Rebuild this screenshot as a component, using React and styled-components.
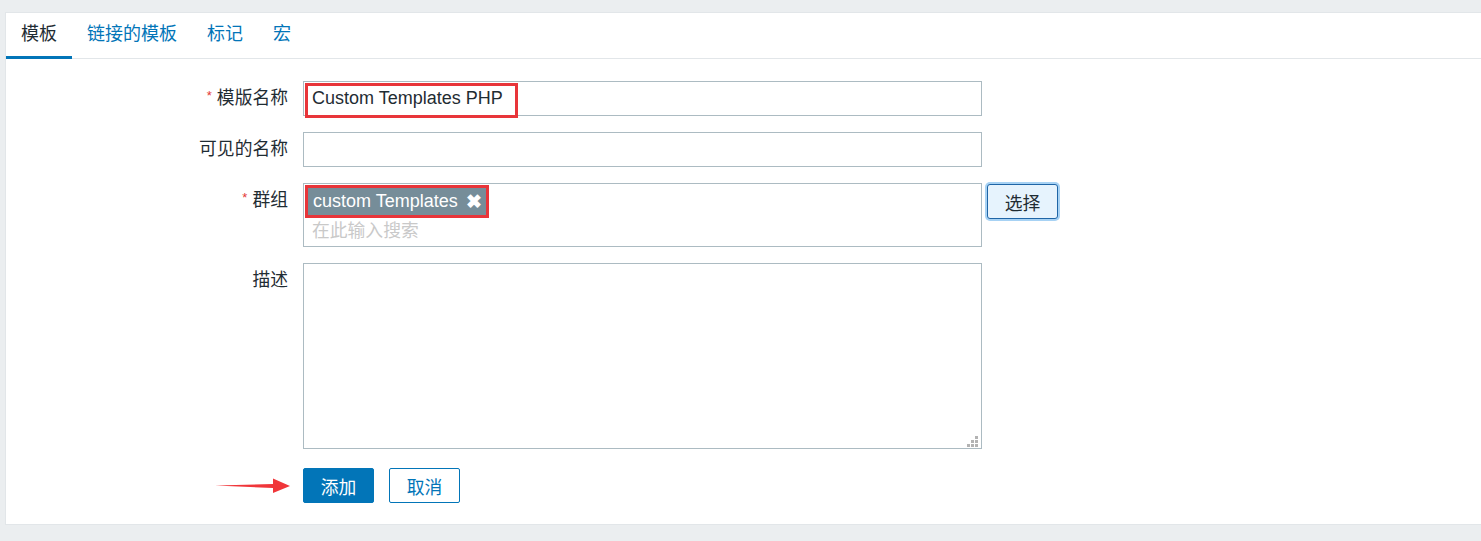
import React from 'react';
import styled, { createGlobalStyle } from 'styled-components';

const GlobalStyle = createGlobalStyle`
  html, body {
    margin: 0;
    background: #ebeef0;
    font-family: "Liberation Sans", "Noto Sans CJK SC", sans-serif;
    color: #1f2c33;
  }
`;

const Page = styled.div`
  padding: 12px 0 16px 5px;
`;

const Panel = styled.div`
  background: #fff;
  border: 1px solid #e2e6e9;
  border-right: none;
  height: 513px;
  box-sizing: border-box;
`;

const TabBar = styled.div`
  display: flex;
  height: 46px;
  border-bottom: 1px solid #e2e6e9;
  box-sizing: border-box;
`;

const Tab = styled.div`
  padding: 0 15px;
  font-size: 18px;
  line-height: 42px;
  color: ${({ active }) => (active ? '#1f2c33' : '#0275b8')};
  border-bottom: 3px solid ${({ active }) => (active ? '#0275b8' : 'transparent')};
  margin-bottom: -1px;
`;

const Form = styled.div`
  display: grid;
  grid-template-columns: 282px 679px 1fr;
  column-gap: 15px;
  row-gap: 16px;
  padding-top: 22px;
`;

const Label = styled.div`
  grid-column: 1;
  height: 35px;
  text-align: right;
  font-size: 17.8px;
  line-height: 35px;
  white-space: nowrap;
`;

const Star = styled.span`
  color: #e33734;
  font-size: 13px;
  line-height: 0;
  vertical-align: 4px;
  margin-right: 5px;
`;

const Field = styled.div`
  grid-column: 2 / 4;
  display: flex;
  align-items: flex-start;
  gap: 5px;
`;

const Boxed = styled.div`
  position: relative;
  width: 679px;
  flex: none;
`;

const TextInput = styled.div`
  height: 35px;
  box-sizing: border-box;
  border: 1px solid #acbbc2;
  padding: 0 8px;
  font-size: 18px;
  line-height: 33px;
  color: #1f2c33;
`;

const Mark = styled.div`
  position: absolute;
  left: ${({ $l }) => $l}px;
  top: ${({ $t }) => $t}px;
  width: ${({ $w }) => $w}px;
  height: ${({ $h }) => $h}px;
  border: 3px solid #e8353a;
  box-sizing: border-box;
  pointer-events: none;
`;

const MultiBox = styled.div`
  height: 64px;
  box-sizing: border-box;
  border: 1px solid #acbbc2;
  padding: 3px 3px 0;
`;

const Chip = styled.span`
  display: inline-flex;
  align-items: center;
  gap: 8px;
  height: 28px;
  padding: 0 5px 0 6px;
  background: #768d99;
  color: #fff;
  font-size: 18px;
`;

const ChipX = styled.span`
  font-size: 19px;
  font-weight: bold;
  line-height: 1;
`;

const Placeholder = styled.div`
  padding-left: 5px;
  font-size: 17.8px;
  line-height: 32px;
  color: #c9c9c9;
`;

const SelectButton = styled.button`
  margin-top: 1px;
  width: 71px;
  height: 35px;
  background: #e6f3fd;
  border: 1px solid #1f65a6;
  border-radius: 3px;
  box-shadow: 0 0 0 2px #a7d2f4;
  font-family: inherit;
  font-size: 17.8px;
  color: #1f2c33;
  padding: 0;
`;

const Area = styled.div`
  height: 186px;
  box-sizing: border-box;
  border: 1px solid #acbbc2;
`;

const Grip = styled.svg`
  position: absolute;
  right: 4px;
  bottom: 2px;
`;

const ArrowCell = styled.div`
  grid-column: 1;
  display: flex;
  justify-content: flex-end;
  align-items: center;
  height: 35px;
  margin-top: 3px;
  margin-right: -3px;
`;

const Actions = styled.div`
  grid-column: 2 / 4;
  display: flex;
  gap: 15px;
  margin-top: 3px;
`;

const Button = styled.button`
  width: 71px;
  height: 35px;
  border-radius: 2px;
  font-family: inherit;
  font-size: 17.8px;
  padding: 0;
  border: 1px solid #0275b8;
  background: ${({ primary }) => (primary ? '#0275b8' : '#fff')};
  color: ${({ primary }) => (primary ? '#fff' : '#0275b8')};
`;

const Row = styled.div`
  display: contents;
`;

export default function App() {
  return (
    <>
      <GlobalStyle />
      <Page>
        <Panel>
          <TabBar>
            <Tab active>模板</Tab>
            <Tab>链接的模板</Tab>
            <Tab>标记</Tab>
            <Tab>宏</Tab>
          </TabBar>
          <Form>
            <Row>
              <Label><Star>*</Star>模版名称</Label>
              <Field>
                <Boxed>
                  <TextInput>Custom Templates PHP</TextInput>
                  <Mark $l={2} $t={2} $w={213} $h={35} />
                </Boxed>
              </Field>
            </Row>
            <Row>
              <Label>可见的名称</Label>
              <Field>
                <Boxed>
                  <TextInput />
                </Boxed>
              </Field>
            </Row>
            <Row>
              <Label><Star>*</Star>群组</Label>
              <Field>
                <Boxed>
                  <MultiBox>
                    <Chip>
                      custom Templates <ChipX>✖</ChipX>
                    </Chip>
                    <Placeholder>在此输入搜索</Placeholder>
                  </MultiBox>
                  <Mark $l={2} $t={2} $w={184} $h={33} />
                </Boxed>
                <SelectButton>选择</SelectButton>
              </Field>
            </Row>
            <Row>
              <Label>描述</Label>
              <Field>
                <Boxed>
                  <Area />
                  <Grip width="11" height="11" viewBox="0 0 11 11">
                    <g fill="#b3b3b3">
                      <rect x="8" y="0" width="3" height="3" />
                      <rect x="4" y="4" width="3" height="3" />
                      <rect x="8" y="4" width="3" height="3" />
                      <rect x="0" y="8" width="3" height="3" />
                      <rect x="4" y="8" width="3" height="3" />
                      <rect x="8" y="8" width="3" height="3" />
                    </g>
                  </Grip>
                </Boxed>
              </Field>
            </Row>
            <Row>
              <ArrowCell>
                <svg width="76" height="16" viewBox="0 0 76 16">
                  <path d="M0 7.6 L58 6 L58 0.5 L75 8 L58 15 L58 10 Z" fill="#f0363a" />
                </svg>
              </ArrowCell>
              <Actions>
                <Button primary>添加</Button>
                <Button>取消</Button>
              </Actions>
            </Row>
          </Form>
        </Panel>
      </Page>
    </>
  );
}
